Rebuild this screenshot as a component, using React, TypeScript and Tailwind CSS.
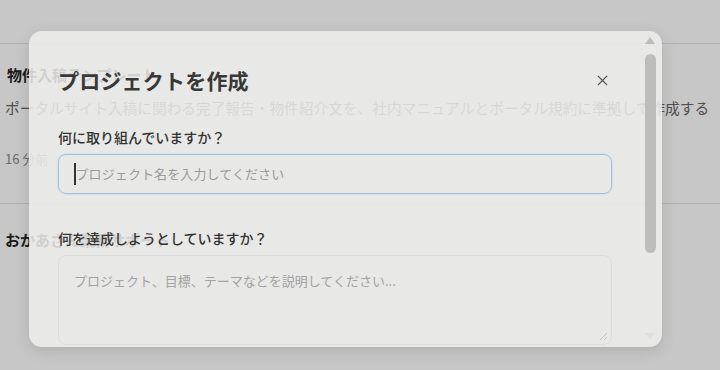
import { X } from "lucide-react";

const font = { fontFamily: '"Noto Sans CJK JP", "Noto Sans", sans-serif' };

const App = () => {
  return (
    <div
      className="relative w-[720px] h-[370px] overflow-hidden bg-white"
      style={font}
    >
      {/* page behind the dialog */}
      <div className="flex flex-col">
        <div className="h-[44px] border-b border-[#e4e4e4]" />
        <div className="px-[5px] pt-[20px] pb-[34px] border-b border-[#e4e4e4]">
          <h3 className="pl-[2px] text-[15px] font-bold text-[#222] leading-[22px]">
            物件入稿テンプレート
          </h3>
          <p className="mt-[11px] text-[14.7px] text-[#666] leading-[22px] whitespace-nowrap">
            ポータルサイト入稿に関わる完了報告・物件紹介文を、社内マニュアルとポータル規約に準拠して作成する
          </p>
          <p className="mt-[30px] text-[13px] text-[#888] leading-[20px]">16 分前</p>
        </div>
        <div className="px-[5px] pt-[25px]">
          <h3 className="text-[15px] font-bold text-[#222] leading-[22px]">
            おかあさん業務サポート
          </h3>
        </div>
      </div>

      {/* overlay */}
      <div className="absolute inset-0 bg-black/[0.22]" />

      {/* dialog */}
      <div className="absolute left-[29px] top-[31px] w-[633px] h-[316px] rounded-[13px] bg-[#eeeeec]/[0.86] shadow-[0_4px_16px_rgba(0,0,0,0.12)] flex overflow-hidden">
        <div className="flex-1 pl-[29px] pr-[30px] pt-[34px]">
          <div className="flex items-center justify-between">
            <h2 className="text-[21px] font-bold text-[#383838] leading-[30px] tracking-[0.2px]">
              プロジェクトを作成
            </h2>
            <X className="w-[17px] h-[17px] mr-[1px] text-[#555]" strokeWidth={1.6} />
          </div>

          <label className="block mt-[31px] text-[14px] font-medium text-[#333] leading-[22px]">
            何に取り組んでいますか？
          </label>
          <div className="mt-[6px] h-[40px] rounded-[8px] border border-[#a9bdd8] ring-1 ring-[#d3deec] flex items-center pl-[15px]">
            <span className="w-[1.5px] h-[22px] bg-[#333]" />
            <span className="text-[13px] text-[#9a9a9a] tracking-[0.1px]">
              プロジェクト名を入力してください
            </span>
          </div>

          <label className="block mt-[33px] text-[14px] font-medium text-[#333] leading-[22px]">
            何を達成しようとしていますか？
          </label>
          <div className="relative mt-[6px] h-[90px] rounded-[8px] border border-[#dcdcda] pl-[15px] pt-[11px]">
            <span className="text-[13px] text-[#a2a2a2]">
              プロジェクト、目標、テーマなどを説明してください...
            </span>
            <svg
              className="absolute right-[3px] bottom-[3px]"
              width="10"
              height="10"
              viewBox="0 0 10 10"
            >
              <path d="M9 2 L2 9 M9 6 L6 9" stroke="#c4c4c4" strokeWidth="1" />
            </svg>
          </div>
        </div>

        {/* scrollbar */}
        <div className="w-[16px] mr-[4px] flex flex-col items-center pt-[6px]">
          <svg width="10" height="7" viewBox="0 0 10 7">
            <path d="M5 0 L10 7 L0 7 Z" fill="#bdbdbd" />
          </svg>
          <div className="mt-[10px] w-[11px] h-[199px] rounded-full bg-[#bdbdbb]" />
          <div className="flex-1" />
          <svg className="mb-[7px]" width="10" height="7" viewBox="0 0 10 7">
            <path d="M0 0 L10 0 L5 7 Z" fill="#dedede" />
          </svg>
        </div>
      </div>
    </div>
  );
};

export default App;
